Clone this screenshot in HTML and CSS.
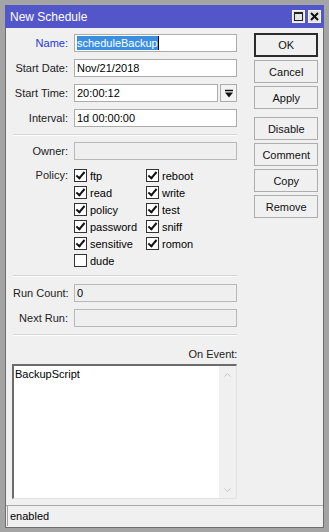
FILE: index.html
```html
<!DOCTYPE html>
<html lang="en">
<head>
  <meta charset="UTF-8" />
  <title>New Schedule</title>
  <link rel="stylesheet" href="styles.css">
</head>
<body>

  <div class="window">
    <div class="titlebar">
      <span class="title">New Schedule</span>
      <div class="tb-btns">
        <span class="tb-btn"><span class="max-box"></span></span>
        <span class="tb-btn">
          <svg width="9" height="9" viewBox="0 0 9 9"><path d="M1 1 L8 8 M8 1 L1 8" stroke="#111" stroke-width="2"/></svg>
        </span>
      </div>
    </div>

    <div class="content">
      <div class="main">
        <div class="form">
          <div class="row">
            <label class="lbl active">Name:</label>
            <div class="field"><span class="sel">scheduleBackup</span><span class="caret"></span></div>
          </div>
          <div class="row">
            <label class="lbl">Start Date:</label>
            <div class="field">Nov/21/2018</div>
          </div>
          <div class="row">
            <label class="lbl">Start Time:</label>
            <div class="field">20:00:12</div>
            <span class="drop">
              <svg width="8" height="9" viewBox="0 0 8 9"><path d="M0 1.5 H8" stroke="#111" stroke-width="1.5"/><path d="M0 3.5 H8 L4 8.5 Z" fill="#111"/></svg>
            </span>
          </div>
          <div class="row">
            <label class="lbl">Interval:</label>
            <div class="field">1d 00:00:00</div>
          </div>

          <div class="sep sep-1"></div>

          <div class="row">
            <label class="lbl">Owner:</label>
            <div class="field disabled"></div>
          </div>

          <div class="policy">
            <label class="lbl">Policy:</label>
            <div class="checks">
              <div class="chk"><span class="box on"></span>ftp</div>
              <div class="chk"><span class="box on"></span>reboot</div>
              <div class="chk"><span class="box on"></span>read</div>
              <div class="chk"><span class="box on"></span>write</div>
              <div class="chk"><span class="box on"></span>policy</div>
              <div class="chk"><span class="box on"></span>test</div>
              <div class="chk"><span class="box on"></span>password</div>
              <div class="chk"><span class="box on"></span>sniff</div>
              <div class="chk"><span class="box on"></span>sensitive</div>
              <div class="chk"><span class="box on"></span>romon</div>
              <div class="chk"><span class="box"></span>dude</div>
            </div>
          </div>

          <div class="sep sep-2"></div>

          <div class="row">
            <label class="lbl">Run Count:</label>
            <div class="field disabled">0</div>
          </div>
          <div class="row">
            <label class="lbl">Next Run:</label>
            <div class="field disabled"></div>
          </div>

          <div class="sep sep-3"></div>

          <div class="event-lbl">On Event:</div>
          <div class="script">
            <div class="script-text">BackupScript</div>
            <div class="scroll">
              <svg width="7" height="4" viewBox="0 0 7 4"><path d="M0.5 3.5 L3.5 0.5 L6.5 3.5" fill="none" stroke="#c4c4c4"/></svg>
              <svg width="7" height="4" viewBox="0 0 7 4"><path d="M0.5 0.5 L3.5 3.5 L6.5 0.5" fill="none" stroke="#c4c4c4"/></svg>
            </div>
          </div>
        </div>

        <div class="buttons">
          <button class="btn default">OK</button>
          <button class="btn">Cancel</button>
          <button class="btn">Apply</button>
          <button class="btn gap">Disable</button>
          <button class="btn">Comment</button>
          <button class="btn">Copy</button>
          <button class="btn">Remove</button>
        </div>
      </div>

      <div class="status">
        <div class="status-box">enabled</div>
      </div>
    </div>
  </div>

</body>
</html>
```

FILE: styles.css
```css
* {
  box-sizing: border-box;
  margin: 0;
  padding: 0;
}

body {
  width: 329px;
  height: 532px;
  font-family: 'Liberation Sans', Arial, sans-serif;
  font-size: 11px;
  color: #000;
  background: #9c9c9c;
}

.window {
  width: 329px;
  height: 532px;
  padding: 5px 5px 4px 5px;
  display: flex;
  flex-direction: column;
  background: #a4a4a4;
}

.titlebar {
  height: 23px;
  background: #5356c8;
  color: white;
  display: flex;
  align-items: center;
  justify-content: space-between;
  padding: 0 3px 0 5px;
}

.title {
  font-size: 12px;
}

.tb-btns {
  display: flex;
  gap: 3px;
}

.tb-btn {
  width: 13px;
  height: 13px;
  background: #e4e4e4;
  border: 1px solid #f4f4f4;
  display: flex;
  align-items: center;
  justify-content: center;
}

.max-box {
  width: 9px;
  height: 9px;
  border: 1px solid #222;
  border-top-width: 2px;
}

.content {
  flex: 1;
  background: #f0f0f0;
  border: 1px solid #6e6e6e;
  border-top: none;
  display: flex;
  flex-direction: column;
}

.main {
  flex: 1;
  display: flex;
  padding: 5px 5px 0 7px;
}

.form {
  width: 226px;
  padding-top: 1px;
}

.row {
  display: flex;
  align-items: center;
  height: 18px;
  margin-bottom: 7px;
}

.lbl {
  width: 61px;
  padding-right: 6px;
  text-align: right;
  flex-shrink: 0;
  white-space: nowrap;
  color: #222;
}

.lbl.active {
  color: #2336dc;
}

.field {
  flex: 1;
  height: 18px;
  background: white;
  border: 1px solid #acacac;
  padding: 0 2px;
  line-height: 16px;
  white-space: nowrap;
  display: flex;
  align-items: center;
}

.field.disabled {
  background: #efefef;
  border-color: #b8b8b8;
}

.sel {
  background: #3b8fe3;
  color: white;
  line-height: 14px;
}

.caret {
  width: 1px;
  height: 14px;
  background: #000;
}

.drop {
  width: 17px;
  height: 18px;
  margin-left: 2px;
  border: 1px solid #acacac;
  background: #f3f3f3;
  display: flex;
  align-items: center;
  justify-content: center;
}

.sep {
  height: 2px;
  border-top: 1px solid #d6d6d6;
  border-bottom: 1px solid #fcfcfc;
}

.sep-1 {
  margin: 3px 0 6px;
}

.sep-2 {
  margin: 6px 0 7px;
}

.sep-3 {
  margin: 3px 0 11px;
}

.policy {
  display: flex;
  align-items: flex-start;
  margin-top: 4px;
}

.policy .lbl {
  line-height: 17px;
}

.checks {
  display: grid;
  grid-template-columns: 72px 70px;
  grid-auto-rows: 17px;
}

.chk {
  display: flex;
  align-items: center;
  gap: 3px;
  white-space: nowrap;
}

.box {
  width: 13px;
  height: 13px;
  border: 1px solid #333;
  background: white;
  position: relative;
}

.box.on::after {
  content: "";
  position: absolute;
  left: 3px;
  top: 0px;
  width: 3px;
  height: 7px;
  border: solid #111;
  border-width: 0 2px 2px 0;
  transform: rotate(40deg);
}

.event-lbl {
  text-align: right;
  height: 15px;
  line-height: 15px;
  margin-bottom: 2px;
  color: #222;
}

.script {
  height: 135px;
  margin-left: -1px;
  background: white;
  border-top: 2px solid #6c6c6c;
  border-left: 2px solid #6c6c6c;
  border-right: 1px solid #e2e2e2;
  border-bottom: 1px solid #e2e2e2;
  display: flex;
}

.script-text {
  flex: 1;
  padding: 2px 1px;
}

.scroll {
  width: 17px;
  background: #f0f0f0;
  display: flex;
  flex-direction: column;
  justify-content: space-between;
  align-items: center;
  padding: 7px 0 6px;
}

.buttons {
  margin-left: 17px;
  width: 64px;
  display: flex;
  flex-direction: column;
  gap: 3px;
}

.btn {
  height: 23px;
  background: #f0f0f0;
  border: 1px solid #adadad;
  font-family: inherit;
  font-size: 11px;
  color: #111;
}

.btn.default {
  border: 2px solid #2b2b2b;
  height: 24px;
}

.btn.gap {
  margin-top: 5px;
}

.status {
  height: 22px;
  border-top: 1px solid #a8a8a8;
  padding: 0 1px 0 1px;
}

.status-box {
  height: 20px;
  border-left: 1px solid #a0a0a0;
  padding-left: 2px;
  line-height: 21px;
}
```
